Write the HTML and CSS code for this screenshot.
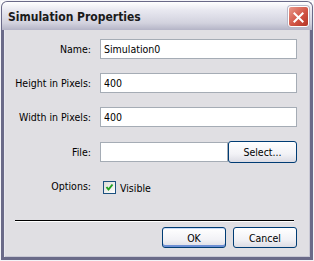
FILE: index.html
```html
<!DOCTYPE html>
<html lang="en">

<head>
  <meta charset="UTF-8">
  <title>Simulation Properties</title>
  <link rel="stylesheet" href="styles.css">
</head>

<body>

  <div class="window">
    <div class="titlebar">
      <span class="title">Simulation Properties</span>
      <button class="close" aria-label="Close">
        <svg viewBox="0 0 21 21" width="21" height="21">
          <path d="M6 6 L15 15 M15 6 L6 15" stroke="#fff" stroke-width="2.2" stroke-linecap="square" />
        </svg>
      </button>
    </div>

    <div class="client">
      <div class="form">
        <label class="label">Name:</label>
        <div class="field"><input class="text caret" value="Simulation0"></div>

        <label class="label">Height in Pixels:</label>
        <div class="field"><input class="text" value="400"></div>

        <label class="label">Width in Pixels:</label>
        <div class="field"><input class="text" value="400"></div>

        <label class="label">File:</label>
        <div class="field file-row">
          <input class="text" value="">
          <button class="btn select">Select...</button>
        </div>

        <label class="label">Options:</label>
        <div class="field check-row">
          <span class="checkbox">
            <svg viewBox="0 0 11 11" width="11" height="11">
              <path d="M2.5 5 L4.5 7.5 L8.5 2.5" fill="none" stroke="#21a121" stroke-width="2" />
            </svg>
          </span>
          <span class="check-label">Visible</span>
        </div>
      </div>

      <div class="separator"></div>

      <div class="buttons">
        <button class="btn default">OK</button>
        <button class="btn">Cancel</button>
      </div>
    </div>
  </div>

</body>

</html>
```

FILE: styles.css
```css
body {
  margin: 0;
  background: #fff;
  font-family: "DejaVu Sans Condensed", "DejaVu Sans", sans-serif;
  font-size: 10.5px;
  color: #000;
}

.window {
  width: 314px;
  height: 261px;
  box-sizing: border-box;
  border: 1px solid #f4f4f8;
  display: flex;
  flex-direction: column;
}

.titlebar {
  height: 28px;
  flex-shrink: 0;
  display: flex;
  align-items: center;
  justify-content: space-between;
  padding: 0 3px 0 6px;
  border: 1px solid #6a6a88;
  border-bottom: none;
  border-radius: 6px 6px 0 0;
  background: linear-gradient(#ffffff, #e8e8f0 30%, #d2d2de 75%, #b4b4c6);
}

.title {
  font-family: "DejaVu Sans Condensed", "DejaVu Sans", sans-serif;
  font-weight: bold;
  font-size: 12px;
  color: #1a1a1a;
  margin-top: 2px;
}

.close {
  width: 21px;
  height: 21px;
  padding: 0;
  border: 1px solid #fff;
  border-radius: 3px;
  background: linear-gradient(135deg, #e99a8c, #d25546 55%, #b43324);
  box-shadow: 0 0 0 1px #b8b8c8;
  display: flex;
  margin-top: 1px;
}

.client {
  flex: 1;
  background: #e0dfe3;
  border: 3px solid #6a6a88;
  border-top: none;
  box-shadow: inset 1px 0 #e8e8ee, inset -1px -1px #c8c8d4;
  padding: 9px 12px 0 8px;
  display: flex;
  flex-direction: column;
}

.form {
  display: grid;
  grid-template-columns: 79px 1fr;
  column-gap: 9px;
  row-gap: 14px;
  align-items: center;
  padding-right: 1px;
}

.label {
  text-align: right;
  white-space: nowrap;
}

.field {
  display: flex;
  align-items: center;
}

.text {
  flex: 1;
  min-width: 0;
  height: 20px;
  box-sizing: border-box;
  border: 1px solid #a5acb5;
  background: #fff;
  font: inherit;
  padding: 0 3px;
  margin: 0;
  outline: none;
}

.caret {
  caret-color: #000;
}

.file-row .text {
  flex: 0 0 128px;
}

.btn {
  height: 21px;
  box-sizing: border-box;
  border: 1px solid #003c74;
  border-radius: 3px;
  background: linear-gradient(#ffffff, #f2f2f6 60%, #dcdce4);
  font: inherit;
  color: #000;
  padding: 0;
  width: 64px;
}

.select {
  flex: 1;
  height: 22px;
}

.default {
  box-shadow: inset 0 -2px #6d8fd4, inset 0 1px #c9dcf8;
}

.check-row {
  padding-left: 3px;
  margin-top: 4px;
}

.checkbox {
  width: 11px;
  height: 11px;
  border: 1px solid #1c5180;
  background: linear-gradient(135deg, #dcdcd7, #fff);
  display: flex;
}

.check-label {
  margin-left: 4px;
}

.separator {
  margin: 26px 4px 0 3px;
  border-top: 1px solid #000;
  border-bottom: 1px solid #fff;
}

.buttons {
  display: flex;
  justify-content: flex-end;
  gap: 7px;
  margin-top: 5px;
  padding-right: 1px;
}
```
